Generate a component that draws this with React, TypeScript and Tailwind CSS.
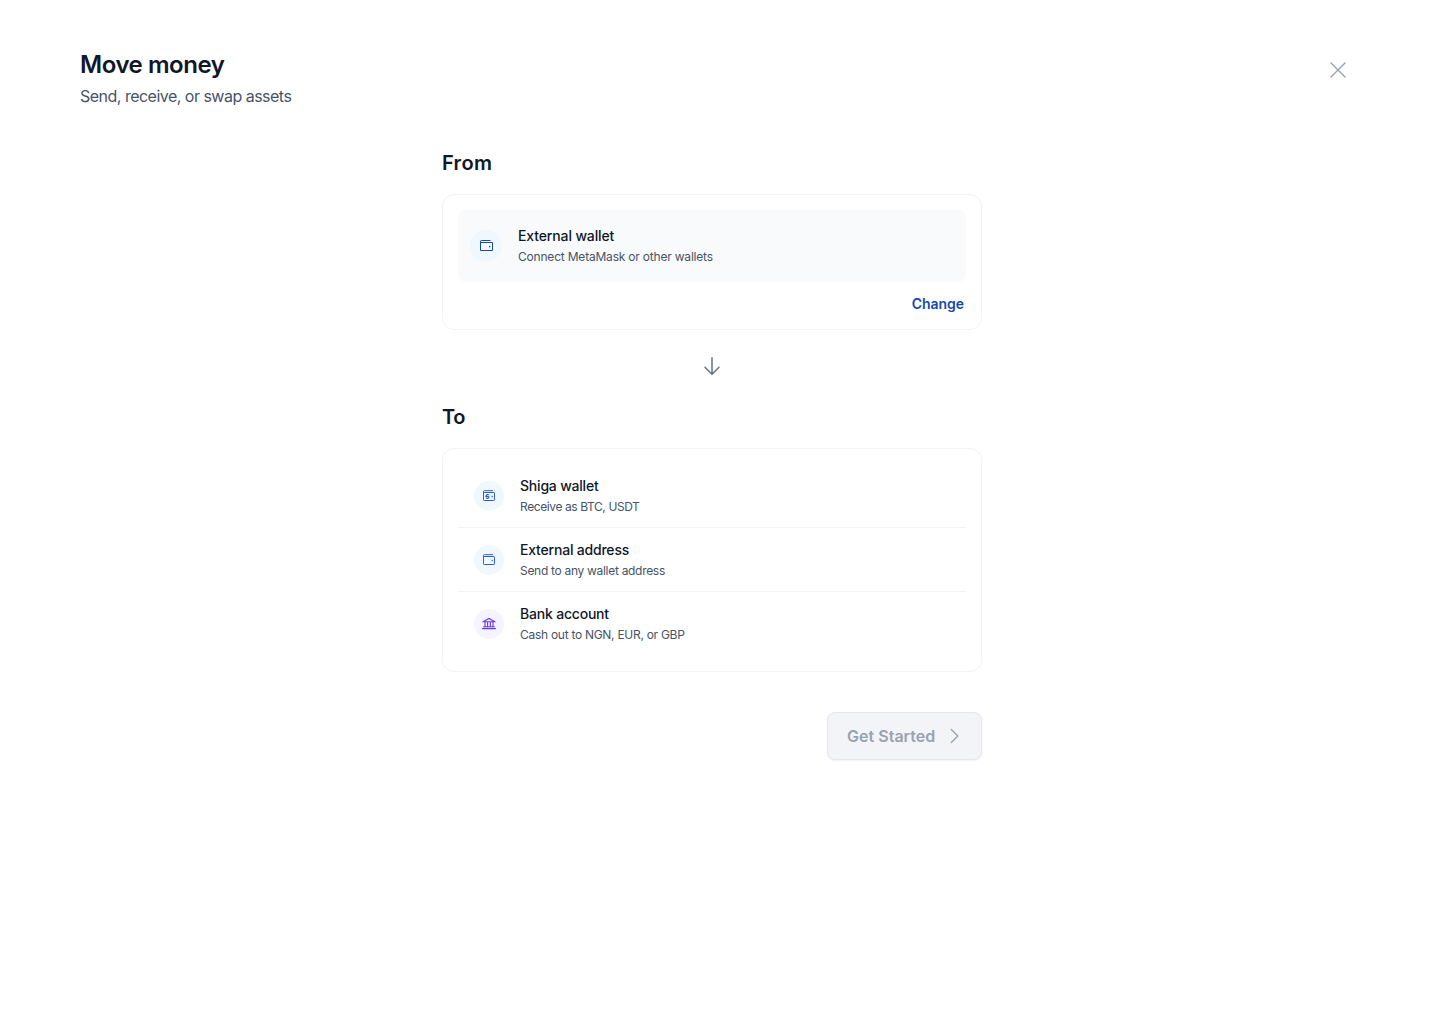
import { clsx } from 'clsx'
import type { ReactNode } from 'react'

const WalletIcon = () => (
  <svg width="16" height="16" viewBox="0 0 16 16" fill="none" stroke="#1849A9" strokeWidth="1">
    <path d="M12.5 2.5H3.25A.75.75 0 0 0 2.5 3.25V12.5H14.5V4.5H2.5" strokeLinejoin="round" />
    <rect x="11" y="8" width="1.3" height="1.3" fill="#1849A9" stroke="none" />
  </svg>
)

// softer wallet used in the destination list
const SmallWalletIcon = ({ branded = false }: { branded?: boolean }) => (
  <svg width="16" height="16" viewBox="0 0 16 16" fill="none" stroke="#2B5FC9" strokeWidth="1" strokeLinejoin="round">
    <path d="M12 2.7H3.3A.8.8 0 0 0 2.5 3.5V11.8A.7.7 0 0 0 3.2 12.5H12.8A.7.7 0 0 0 13.5 11.8V5.2A.7.7 0 0 0 12.8 4.5H3.2A.7.7 0 0 1 2.5 3.9" />
    {branded && <path d="M8 7C7 6.1 5.3 6.4 5.3 7.5S7.9 8.2 7.9 9.3 6.2 10.7 5.1 9.8M4.3 8.4H6.8" strokeWidth="1.1" />}
    <rect x="10.6" y="7.8" width="1.2" height="1.4" fill="#2B5FC9" stroke="none" />
  </svg>
)

const BankIcon = () => (
  <svg width="16" height="16" viewBox="0 0 16 16" fill="none" stroke="#6938EF" strokeWidth="1.1" strokeLinecap="round" strokeLinejoin="round">
    <path d="M2 5.8H14L8 2.4ZM4 6V11M6.6 6V11M9.4 6V11M12 6V11M2.6 10.8H13.4M1.5 12.6H14.5" />
  </svg>
)

type Option = {
  title: string
  description: string
  icon: ReactNode
  iconBg: string
  textTracking: string
}

const options: Option[] = [
  {
    title: 'Shiga wallet',
    description: 'Receive as BTC, USDT',
    icon: <SmallWalletIcon branded />,
    iconBg: 'bg-[#EFF8FF]',
    textTracking: 'tracking-[-0.4px]',
  },
  {
    title: 'External address',
    description: 'Send to any wallet address',
    icon: <SmallWalletIcon />,
    iconBg: 'bg-[#EFF8FF]',
    textTracking: 'tracking-[-0.3px]',
  },
  {
    title: 'Bank account',
    description: 'Cash out to NGN, EUR, or GBP',
    icon: <BankIcon />,
    iconBg: 'bg-[#F4F3FF]',
    textTracking: 'tracking-[-0.28px]',
  },
]

const App = () => {
  return (
    <div className="min-h-screen bg-white font-['Inter',sans-serif] text-[#101828]">
      <header className="flex items-start justify-between pt-12 pr-[90px] pl-20">
        <div>
          <h1 className="pt-px text-2xl leading-8 font-semibold tracking-[-0.45px]">Move money</h1>
          <p className="mt-[3px] text-base leading-6 tracking-[-0.51px] text-[#475467]">Send, receive, or swap assets</p>
        </div>
        <button className="mt-2.5 flex h-6 w-6 items-center justify-center" aria-label="Close">
          <svg width="24" height="24" viewBox="0 0 24 24" fill="none" stroke="#98A2B3" strokeWidth="1.4" strokeLinecap="round">
            <path d="M5 5 19 19M19 5 5 19" />
          </svg>
        </button>
      </header>

      <main className="ml-[442px] w-[540px] pt-10">
        <h2 className="text-xl leading-[30px] font-semibold tracking-[0.3px]">From</h2>
        <section className="mt-4 h-[136px] rounded-xl border border-[#F2F4F7] p-[15px]">
          <div className="flex h-[72px] items-center gap-4 rounded-lg bg-[#F9FAFB] px-3">
            <div className="flex h-8 w-8 shrink-0 items-center justify-center rounded-full bg-[#EFF8FF]">
              <WalletIcon />
            </div>
            <div>
              <p className="text-sm leading-5 font-medium tracking-[-0.13px]">External wallet</p>
              <p className="mt-px text-xs leading-5 tracking-[-0.2px] text-[#475467]">Connect MetaMask or other wallets</p>
            </div>
          </div>
          <div className="flex justify-end pt-3 pr-0.5">
            <button className="text-sm leading-5 font-semibold tracking-[-0.03px] text-[#1849A9]">Change</button>
          </div>
        </section>

        <div className="flex h-[72px] items-center justify-center">
          <svg width="24" height="24" viewBox="0 0 24 24" fill="none" stroke="#667085" strokeWidth="1.5" strokeLinecap="round" strokeLinejoin="round">
            <path d="M12 3.7V20.3M5 13.3 12 20.3 19 13.3" />
          </svg>
        </div>

        <h2 className="text-xl leading-[30px] font-semibold tracking-[-0.5px]">To</h2>
        <section className="mt-4 h-[224px] rounded-xl border border-[#F2F4F7] p-[15px]">
          {options.map((option, index) => (
            <div
              key={option.title}
              className={clsx(
                'flex h-16 items-center gap-4 px-4',
                index < options.length - 1 && 'border-b border-[#F2F4F7] pt-px'
              )}
            >
              <div className={clsx('flex h-[30px] w-[30px] shrink-0 items-center justify-center rounded-full', option.iconBg)}>
                {option.icon}
              </div>
              <div>
                <p className="text-sm leading-5 font-medium tracking-[-0.2px]">{option.title}</p>
                <p className={clsx('mt-px text-xs leading-5 text-[#475467]', option.textTracking)}>{option.description}</p>
              </div>
            </div>
          ))}
        </section>

        <div className="mt-10 flex justify-end">
          <button
            disabled
            className="flex h-12 w-[155px] items-center justify-between rounded-lg border border-[#E4E7EC] bg-[#F2F4F7] pr-4 pl-[19px] text-base font-semibold text-[#98A2B3] shadow-xs"
          >
            <span className="tracking-[0.02px]">Get Started</span>
            <svg width="20" height="20" viewBox="0 0 20 20" fill="none" stroke="#98A2B3" strokeWidth="1.3" strokeLinecap="round" strokeLinejoin="round">
              <path d="M6.3 3.5 12.8 10 6.3 16.5" />
            </svg>
          </button>
        </div>
      </main>
    </div>
  )
}

export default App
